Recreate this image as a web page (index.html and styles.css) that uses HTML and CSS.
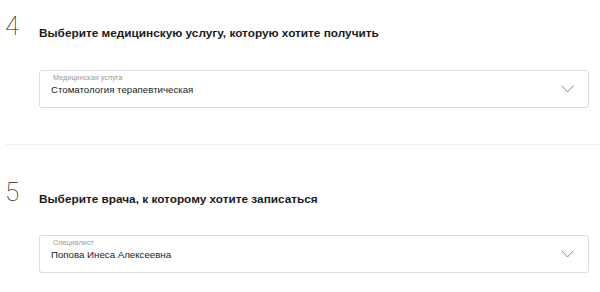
FILE: index.html
```html
<!DOCTYPE html>
<html lang="ru">
<head>
<meta charset="utf-8">
<title>Запись</title>
<link rel="stylesheet" href="styles.css">
</head>
<body>
<div class="steps">
  <section class="step step-first">
    <div class="step-head">
      <span class="step-num">4</span>
      <h2 class="step-title">Выберите медицинскую услугу, которую хотите получить</h2>
    </div>
    <div class="select">
      <div class="select-text">
        <span class="select-label">Медицинская услуга</span>
        <span class="select-value">Стоматология терапевтическая</span>
      </div>
      <svg class="chevron" width="13" height="8" viewBox="0 0 13 8"><polyline points="0.5,0.5 6.5,7 12.5,0.5" fill="none" stroke="#8c8c8c" stroke-width="1"/></svg>
    </div>
  </section>
  <section class="step step-last">
    <div class="step-head">
      <span class="step-num">5</span>
      <h2 class="step-title">Выберите врача, к которому хотите записаться</h2>
    </div>
    <div class="select">
      <div class="select-text">
        <span class="select-label">Специалист</span>
        <span class="select-value">Попова Инеса Алексеевна</span>
      </div>
      <svg class="chevron" width="13" height="8" viewBox="0 0 13 8"><polyline points="0.5,0.5 6.5,7 12.5,0.5" fill="none" stroke="#8c8c8c" stroke-width="1"/></svg>
    </div>
  </section>
</div>
</body>
</html>
```

FILE: styles.css
```css
html, body {
  margin: 0;
  padding: 0;
  background: #ffffff;
}

body {
  font-family: "Liberation Sans", Arial, sans-serif;
  color: #1c1c1c;
  width: 600px;
  overflow: hidden;
}

.steps {
  display: flex;
  flex-direction: column;
}

.step {
  margin-left: 5px;
  padding: 34px 0 36px 0;
  border-bottom: 1px solid #f2f2f2;
  display: flex;
  flex-direction: column;
  gap: 30px;
}

.step-first {
  padding-top: 13px;
  gap: 31px;
}

.step-last {
  padding-bottom: 16px;
  border-bottom: none;
}

.step-head {
  display: flex;
  align-items: flex-end;
}

.step-num {
  flex: 0 0 34px;
  font-family: "Roboto", "Lato", sans-serif;
  font-weight: 100;
  font-size: 26px;
  line-height: 26px;
  color: #222;
}

.step-title {
  margin: 0 0 -2px 0;
  font-size: 11.8px;
  line-height: 16px;
  font-weight: bold;
  color: #1a1a1a;
}

.select {
  margin-left: 34px;
  width: 550px;
  box-sizing: border-box;
  height: 38px;
  border: 1px solid #dcdcdc;
  border-radius: 3px;
  display: flex;
  align-items: center;
  padding: 0 14px 0 11px;
}

.select-text {
  flex: 1;
  display: flex;
  flex-direction: column;
  padding-top: 1px;
  align-self: flex-start;
}

.select-label {
  font-size: 7.3px;
  line-height: 10px;
  color: #9a9a9a;
  padding-left: 2px;
  margin-top: 1px;
}

.select-value {
  font-size: 9.7px;
  line-height: 13px;
  color: #222;
}

.chevron {
  display: block;
  flex: 0 0 auto;
}
```
